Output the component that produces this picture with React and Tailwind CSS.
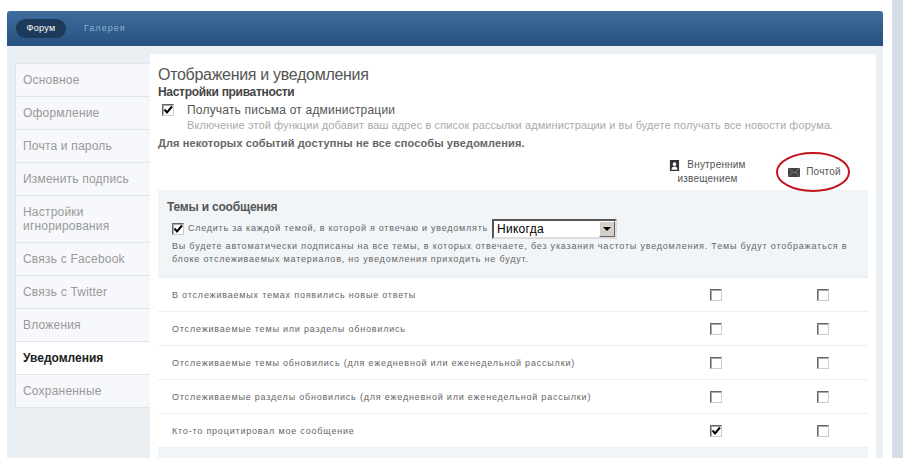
import React from "react";

const menu = [
  "Основное",
  "Оформление",
  "Почта и пароль",
  "Изменить подпись",
  "Настройки игнорирования",
  "Связь с Facebook",
  "Связь с Twitter",
  "Вложения",
  "Уведомления",
  "Сохраненные",
];

const rows = [
  { text: "В отслеживаемых темах появились новые ответы" },
  { text: "Отслеживаемые темы или разделы обновились" },
  { text: "Отслеживаемые темы обновились (для ежедневной или еженедельной рассылки)" },
  { text: "Отслеживаемые разделы обновились (для ежедневной или еженедельной рассылки)" },
  { text: "Кто-то процитировал мое сообщение", checked: true },
];

const Tick = () => (
  <svg viewBox="0 0 10 10" className="w-[10px] h-[10px]">
    <path d="M1.5 4.5 L4 7.5 L9 1.5" fill="none" stroke="#000" strokeWidth="2" />
  </svg>
);

const Box = ({ checked }) => (
  <div className="w-[12px] h-[12px] flex items-center justify-center bg-white border border-t-[#666] border-l-[#666] border-r-[#ccc] border-b-[#ccc] shadow-[inset_1px_1px_0_#aaa]">
    {checked && <Tick />}
  </div>
);

const App = () => {
  return (
    <div className="h-[458px] overflow-hidden bg-white flex font-['Liberation_Sans',sans-serif] relative">
      <div className="w-[7px] shrink-0" />
      <div className="w-[876px] shrink-0 flex flex-col pt-[11px]">
        <div className="h-[35px] shrink-0 rounded-t-[3px] bg-gradient-to-b from-[#3f6d9d] to-[#26507f] flex items-center pl-[9px]">
          <div className="h-[19px] w-[50px] rounded-full bg-[#1d3a5a] text-white text-[9px] tracking-[0.3px] flex items-center justify-center">
            Форум
          </div>
          <div className="ml-[18px] mt-[1px] text-[#8fb0d0] text-[9px] tracking-[1px]">Галерея</div>
        </div>

        <div className="flex-1 flex bg-[#e9eff3] pl-[8px] pr-[7px] pt-[8px]">
          {/* SIDEBAR */}
          <div className="w-[135px] shrink-0 pt-[9px]">
            <div className="border-t border-l border-[#dfe6ee] bg-[#f6f8fb]">
              {menu.map((item) => (
                <div
                  key={item}
                  className={
                    item === "Уведомления"
                      ? "bg-white border-b border-[#dfe6ee] px-[7px] py-[9px] text-[12px] leading-[14px] font-bold text-[#222]"
                      : "border-b border-[#dfe6ee] px-[7px] py-[9px] text-[12px] leading-[14px] tracking-[0.2px] text-[#999]"
                  }
                >
                  {item}
                </div>
              ))}
            </div>
          </div>

          {/* MAIN PANEL */}
          <div className="flex-1 bg-white px-[8px] pt-[11px] rounded-tr-[3px]">
            <h1 className="text-[16px] leading-[19px] tracking-[-0.3px] text-[#555]">Отображения и уведомления</h1>
            <h2 className="text-[12px] leading-[14px] font-bold tracking-[-0.3px] text-[#444] mt-[1px]">Настройки приватности</h2>

            <div className="flex mt-[4px]">
              <div className="w-[29px] pl-[4px] pt-[1px] shrink-0">
                <Box checked />
              </div>
              <div>
                <div className="text-[12px] leading-[15px] tracking-[0.2px] text-[#555]">
                  Получать письма от администрации
                </div>
                <div className="text-[11px] leading-[14px] tracking-[0.1px] text-[#aaa]">
                  Включение этой функции добавит ваш адрес в список рассылки администрации и вы будете получать все новости форума.
                </div>
              </div>
            </div>

            <div className="text-[11px] leading-[14px] font-bold tracking-[0.12px] text-[#666] mt-[4px]">
              Для некоторых событий доступны не все способы уведомления.
            </div>

            <div className="flex h-[32px] mt-[8px] text-[10px] leading-[14px] text-[#555] tracking-[0.2px]">
              <div className="flex-1" />
              <div className="w-[107px] text-center">
                <div className="flex items-center justify-center gap-[7px]">
                  <svg viewBox="0 0 12 12" className="w-[11px] h-[11px]">
                    <path d="M1 0 H11 V12 H1 Z M6 2.5 A2 2 0 1 0 6 6.5 A2 2 0 1 0 6 2.5 M2.8 10.5 H9.2 C9.2 8 8 7 6 7 C4 7 2.8 8 2.8 10.5" fill="#333" fillRule="evenodd" />
                  </svg>
                  <span>Внутренним</span>
                </div>
                <div>извещением</div>
              </div>
              <div className="w-[107px] flex justify-center h-[28px] items-center gap-[6px]">
                <svg viewBox="0 0 12 9" className="w-[12px] h-[9px]">
                  <rect width="12" height="9" fill="#444" />
                  <path d="M0 0 L6 5 L12 0 M0 9 L4.5 4 M12 9 L7.5 4" fill="none" stroke="#999" strokeWidth="0.6" />
                </svg>
                <span>Почтой</span>
              </div>
            </div>

            <div className="h-[88px] bg-[#f1f5f8] border-b border-[#e8ecef] px-[9px] pt-[10px]">
              <div className="text-[12px] leading-[15px] font-bold tracking-[-0.2px] text-[#555]">Темы и сообщения</div>
              <div className="flex items-center mt-[4px]">
                <div className="ml-[5px] mr-[4px]">
                  <Box checked />
                </div>
                <span className="text-[9px] tracking-[0.75px] text-[#666]">
                  Следить за каждой темой, в которой я отвечаю и уведомлять
                </span>
                <div className="ml-[4px] w-[125px] h-[20px] flex items-center justify-between bg-white border-2 border-t-[#555] border-l-[#555] border-r-[#ddd] border-b-[#ddd] pl-[3px] text-[12px] text-black tracking-[0.3px]">
                  Никогда
                  <div className="w-[16px] h-[16px] bg-[#d4d0c8] border border-t-white border-l-white border-r-[#666] border-b-[#666] flex items-center justify-center">
                    <div className="w-0 h-0 border-x-[4px] border-x-transparent border-t-[4px] border-t-black" />
                  </div>
                </div>
              </div>
              <div className="ml-[5px] mt-[1px] text-[9px] leading-[13px] tracking-[0.8px] text-[#666]">
                Вы будете автоматически подписаны на все темы, в которых отвечаете, без указания частоты уведомления. Темы будут отображаться в блоке отслеживаемых материалов, но уведомления приходить не будут.
              </div>
            </div>

            {rows.map((row) => (
              <div key={row.text} className="h-[34px] flex items-center border-b border-[#eceff2]">
                <div className="flex-1 pl-[14px] pt-[2px] text-[9px] tracking-[0.8px] text-[#666]">{row.text}</div>
                <div className="w-[122px] flex justify-center">
                  <Box checked={row.checked} />
                </div>
                <div className="w-[91px] flex justify-center">
                  <Box />
                </div>
              </div>
            ))}
            <div className="h-[12px] bg-[#f1f5f8]" />
          </div>
        </div>
      </div>
      <div className="w-[9px] shrink-0" />
      <div className="flex-1 bg-[#d6dce8]" />

      {/* red marker round "Почтой" */}
      <svg className="absolute left-[775px] top-[151px] w-[76px] h-[42px]" viewBox="0 0 76 42">
        <ellipse cx="38" cy="21" rx="36" ry="19" fill="none" stroke="#c4121c" strokeWidth="2" />
      </svg>
    </div>
  );
};

export default App;
